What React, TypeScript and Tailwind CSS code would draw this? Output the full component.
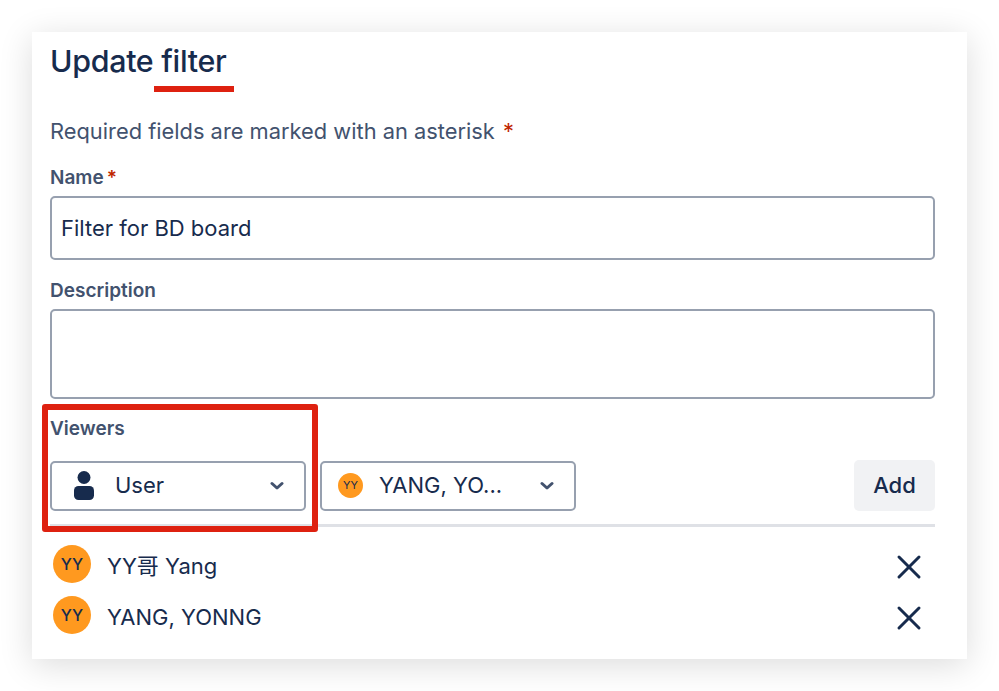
import { X } from "lucide-react";

function Avatar({ small }: { small?: boolean }) {
  return (
    <div
      className={
        small
          ? "w-[25px] h-[25px] rounded-full bg-[#ff991f] flex items-center justify-center text-[11px] text-[#172b4d]"
          : "w-[38px] h-[38px] -mt-[5px] rounded-full bg-[#ff991f] flex items-center justify-center text-[16px] font-medium text-[#172b4d] pb-[1px]"
      }
    >
      YY
    </div>
  );
}

function Chevron() {
  return (
    <svg width="14" height="10" viewBox="0 0 14 10" fill="none">
      <path d="M2 2.5 L7 7 L12 2.5" stroke="#42526e" strokeWidth="3" strokeLinecap="round" strokeLinejoin="round" />
    </svg>
  );
}

function PersonIcon() {
  return (
    <svg width="20" height="29" viewBox="0 0 20 29" fill="#172b4d">
      <circle cx="10" cy="6.5" r="6.5" />
      <rect x="0" y="15" width="20" height="14" rx="4.5" />
    </svg>
  );
}

function ViewerRow({ name }: { name: string }) {
  return (
    <div className="h-[51px] flex items-center pl-[3px] pr-[6px]">
      <Avatar />
      <span className="ml-[16px] text-[22px] text-[#172b4d]">{name}</span>
      <X className="ml-auto text-[#172b4d]" size={40} strokeWidth={1.8} />
    </div>
  );
}

export default function App() {
  return (
    <div className="w-[999px] h-[691px] bg-white p-[32px] font-['Inter','Noto_Sans_CJK_SC',sans-serif]">
      <div className="relative w-[935px] h-[627px] bg-white pl-[18px] pr-[32px] shadow-[0_6px_32px_rgba(0,0,0,0.14)]">
        <h1 className="pt-[7px] text-[30.4px] leading-[44px] font-medium text-[#172b4d] tracking-[-0.3px]">Update filter</h1>
        <div className="absolute left-[122px] top-[54px] w-[80px] h-[6px] bg-[#de2110]" />

        <p className="mt-[33px] text-[21.85px] leading-[30px] text-[#42526e]">
          Required fields are marked with an asterisk <span className="ml-[2px] text-[#bf2600]">*</span>
        </p>

        <div className="mt-[18px] text-[19px] leading-[28px] font-semibold text-[#42526e]">
          Name<span className="ml-[3px] text-[#bf2600]">*</span>
        </div>
        <div className="mt-[4px] h-[64px] border-2 border-[#97a0af] rounded-[5px] flex items-center px-[9px] text-[22px] text-[#172b4d]">
          Filter for BD board
        </div>

        <div className="mt-[17px] text-[19px] leading-[28px] font-semibold text-[#42526e]">Description</div>
        <div className="mt-[4px] h-[90px] border-2 border-[#97a0af] rounded-[5px]" />

        <div className="mt-[16px] text-[19px] leading-[28px] font-semibold text-[#42526e]">Viewers</div>
        <div className="mt-[17px] flex items-center">
          <div className="w-[256px] h-[50px] border-2 border-[#97a0af] rounded-[5px] flex items-center pl-[22px] pr-[20px]">
            <PersonIcon />
            <span className="ml-[21px] text-[22px] text-[#172b4d]">User</span>
            <div className="ml-auto"><Chevron /></div>
          </div>
          <div className="ml-[14px] w-[256px] h-[50px] border-2 border-[#97a0af] rounded-[5px] flex items-center pl-[16px] pr-[20px]">
            <Avatar small />
            <span className="ml-[16px] text-[22px] text-[#172b4d]">YANG, YO...</span>
            <div className="ml-auto"><Chevron /></div>
          </div>
          <button className="ml-auto w-[81px] h-[51px] rounded-[5px] bg-[#f1f2f4] text-[22px] font-medium text-[#172b4d]">Add</button>
        </div>

        <div className="mt-[13px] h-[3px] bg-[#dfe1e6]" />
        <div className="mt-[14px]">
          <ViewerRow name="YY哥 Yang" />
          <ViewerRow name="YANG, YONNG" />
        </div>

        <div className="absolute left-[10px] top-[372px] w-[276px] h-[128px] border-[6px] border-[#de2110] rounded-[3px]" />
      </div>
    </div>
  );
}
